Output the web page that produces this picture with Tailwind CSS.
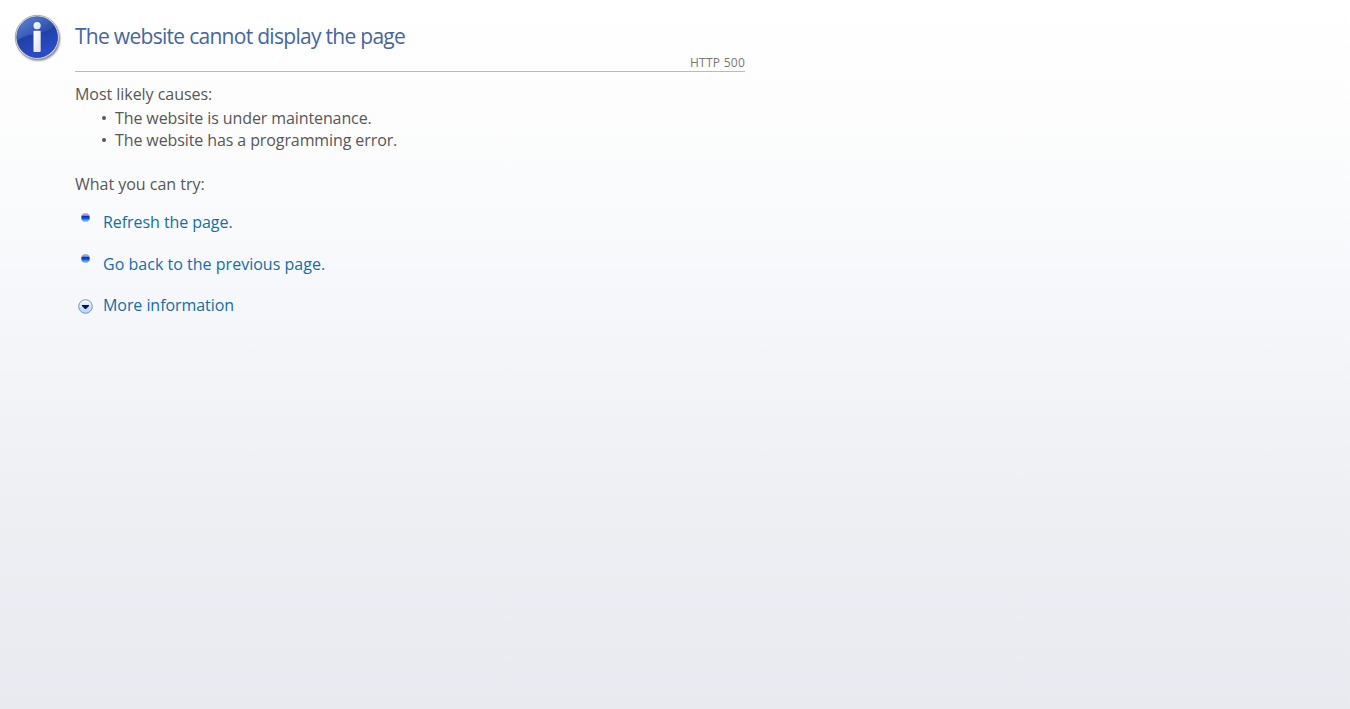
<!DOCTYPE html>
<html lang="en">
<head>
    <meta charset="UTF-8">
    <meta name="viewport" content="width=device-width, initial-scale=1.0">
    <title>HTTP 500 Internal Server Error</title>
    <!-- Tailwind CSS -->
    <script src="https://cdn.jsdelivr.net/npm/@tailwindcss/browser@4"></script>
</head>
<body class="h-screen overflow-hidden bg-[linear-gradient(to_bottom,#fff_0%,#fdfdfd_15%,#f9fafc_32%,#f4f5f9_50%,#eeeff3_72%,#e9eaef_100%)] font-['Open_Sans','Noto_Sans',sans-serif] text-[#575757]">
    <div class="flex w-[745px] pl-[14px] pt-[14px]">
        <!-- Info icon -->
        <svg class="w-[48px] h-[48px] shrink-0" viewBox="0 0 48 48">
            <defs>
                <linearGradient id="disc" x1="0" y1="0" x2="0.4" y2="1">
                    <stop offset="0" stop-color="#3d6cc8"/>
                    <stop offset="0.5" stop-color="#2040a6"/>
                    <stop offset="1" stop-color="#2a4cc8"/>
                </linearGradient>
                <linearGradient id="gloss" x1="0" y1="0" x2="1" y2="0.6">
                    <stop offset="0" stop-color="#7fa6e4" stop-opacity="0.5"/>
                    <stop offset="1" stop-color="#5c87d6" stop-opacity="0.15"/>
                </linearGradient>
                <linearGradient id="stem" x1="0" y1="0" x2="1" y2="1">
                    <stop offset="0" stop-color="#ffffff"/>
                    <stop offset="1" stop-color="#dcdfea"/>
                </linearGradient>
                <filter id="soft"><feGaussianBlur stdDeviation="0.9"/></filter>
            </defs>
            <circle cx="24.2" cy="24.8" r="21.8" fill="#000" opacity="0.5" filter="url(#soft)"/>
            <circle cx="23.2" cy="23.2" r="21.9" fill="#e9ebf1" stroke="#8a8f9c" stroke-width="0.7"/>
            <circle cx="23.2" cy="23.2" r="20.4" fill="url(#disc)" stroke="#1b3590" stroke-width="0.7"/>
            <path d="M3.200 25.300a20 20 0 0 1 36.700-13.200C34 20 17 18 3.300 26.300z" fill="url(#gloss)"/>
            <circle cx="23.100" cy="11.700" r="3.600" fill="url(#stem)"/>
            <rect x="19.500" y="16.700" width="7.200" height="21.300" rx="0.800" fill="url(#stem)"/>
        </svg>
        <div class="flex-1 pl-[13px]">
            <h1 class="h-[42px] pt-[7px] text-[21px] leading-[30px] tracking-[-0.71px] text-[#4465a2] whitespace-nowrap">The website cannot display the page</h1>
            <div class="h-[16px] border-b border-[#b4b9cd] text-right text-xs leading-[14px] tracking-[0.25px] text-[#787878]">HTTP 500</div>
        </div>
    </div>

    <div class="pl-[75px] pt-[11px] text-base leading-[22px] whitespace-nowrap">
        <h2 class="tracking-[-0.04px]">Most likely causes:</h2>
        <ul class="mt-[2px] tracking-[-0.1px]">
            <li class="flex items-center"><span class="ml-[26.500px] mr-[9px] size-[4.500px] rounded-full bg-[#575757]"></span>The website is under maintenance.</li>
            <li class="flex items-center"><span class="ml-[26.500px] mr-[9px] size-[4.500px] rounded-full bg-[#575757]"></span>The website has a programming error.</li>
        </ul>
        <h2 class="mt-[22px] tracking-[-0.02px]">What you can try:</h2>

        <ul class="mt-[16px] text-[#136eab] tracking-[-0.06px]">
            <li class="flex h-[42px]">
                <svg class="ml-[6px] mt-[2px] mr-[13px] w-[9px] h-[9px]" viewBox="0 0 9 9">
                    <defs>
                        <linearGradient id="ball" x1="0" y1="0" x2="0" y2="1">
                            <stop offset="0" stop-color="#b4bfe6"/>
                            <stop offset="0.25" stop-color="#8796dc"/>
                            <stop offset="0.38" stop-color="#1428b8"/>
                            <stop offset="0.6" stop-color="#1450e0"/>
                            <stop offset="0.8" stop-color="#3fa6ee"/>
                            <stop offset="1" stop-color="#84dcf4"/>
                        </linearGradient>
                    </defs>
                    <circle cx="4.500" cy="4.500" r="4.300" fill="url(#ball)" stroke="#8c9cae" stroke-width="0.500"/>
                </svg>
                <a href="#">Refresh the page.</a>
            </li>
            <li class="flex h-[41px]">
                <svg class="ml-[6px] mt-[1px] mr-[13px] w-[9px] h-[9px]" viewBox="0 0 9 9">
                    <circle cx="4.500" cy="4.500" r="4.300" fill="url(#ball)" stroke="#8c9cae" stroke-width="0.500"/>
                </svg>
                <a href="#" class="tracking-[0.02px]">Go back to the previous page.</a>
            </li>
            <li class="flex">
                <svg class="ml-[3px] mt-[5px] mr-[10px] w-[15px] h-[15px]" viewBox="0 0 15 15">
                    <defs>
                        <linearGradient id="ring" x1="0" y1="0" x2="0" y2="1">
                            <stop offset="0" stop-color="#ffffff"/>
                            <stop offset="0.5" stop-color="#cfe4f7"/>
                            <stop offset="1" stop-color="#a9dcf5"/>
                        </linearGradient>
                    </defs>
                    <circle cx="7.500" cy="7.500" r="6.800" fill="url(#ring)" stroke="#7f93b4"/>
                    <path d="M4 6h7v1L8 10H7L4 7z" fill="#08085e"/>
                </svg>
                <a href="#">More information</a>
            </li>
        </ul>
    </div>
</body>
</html>
